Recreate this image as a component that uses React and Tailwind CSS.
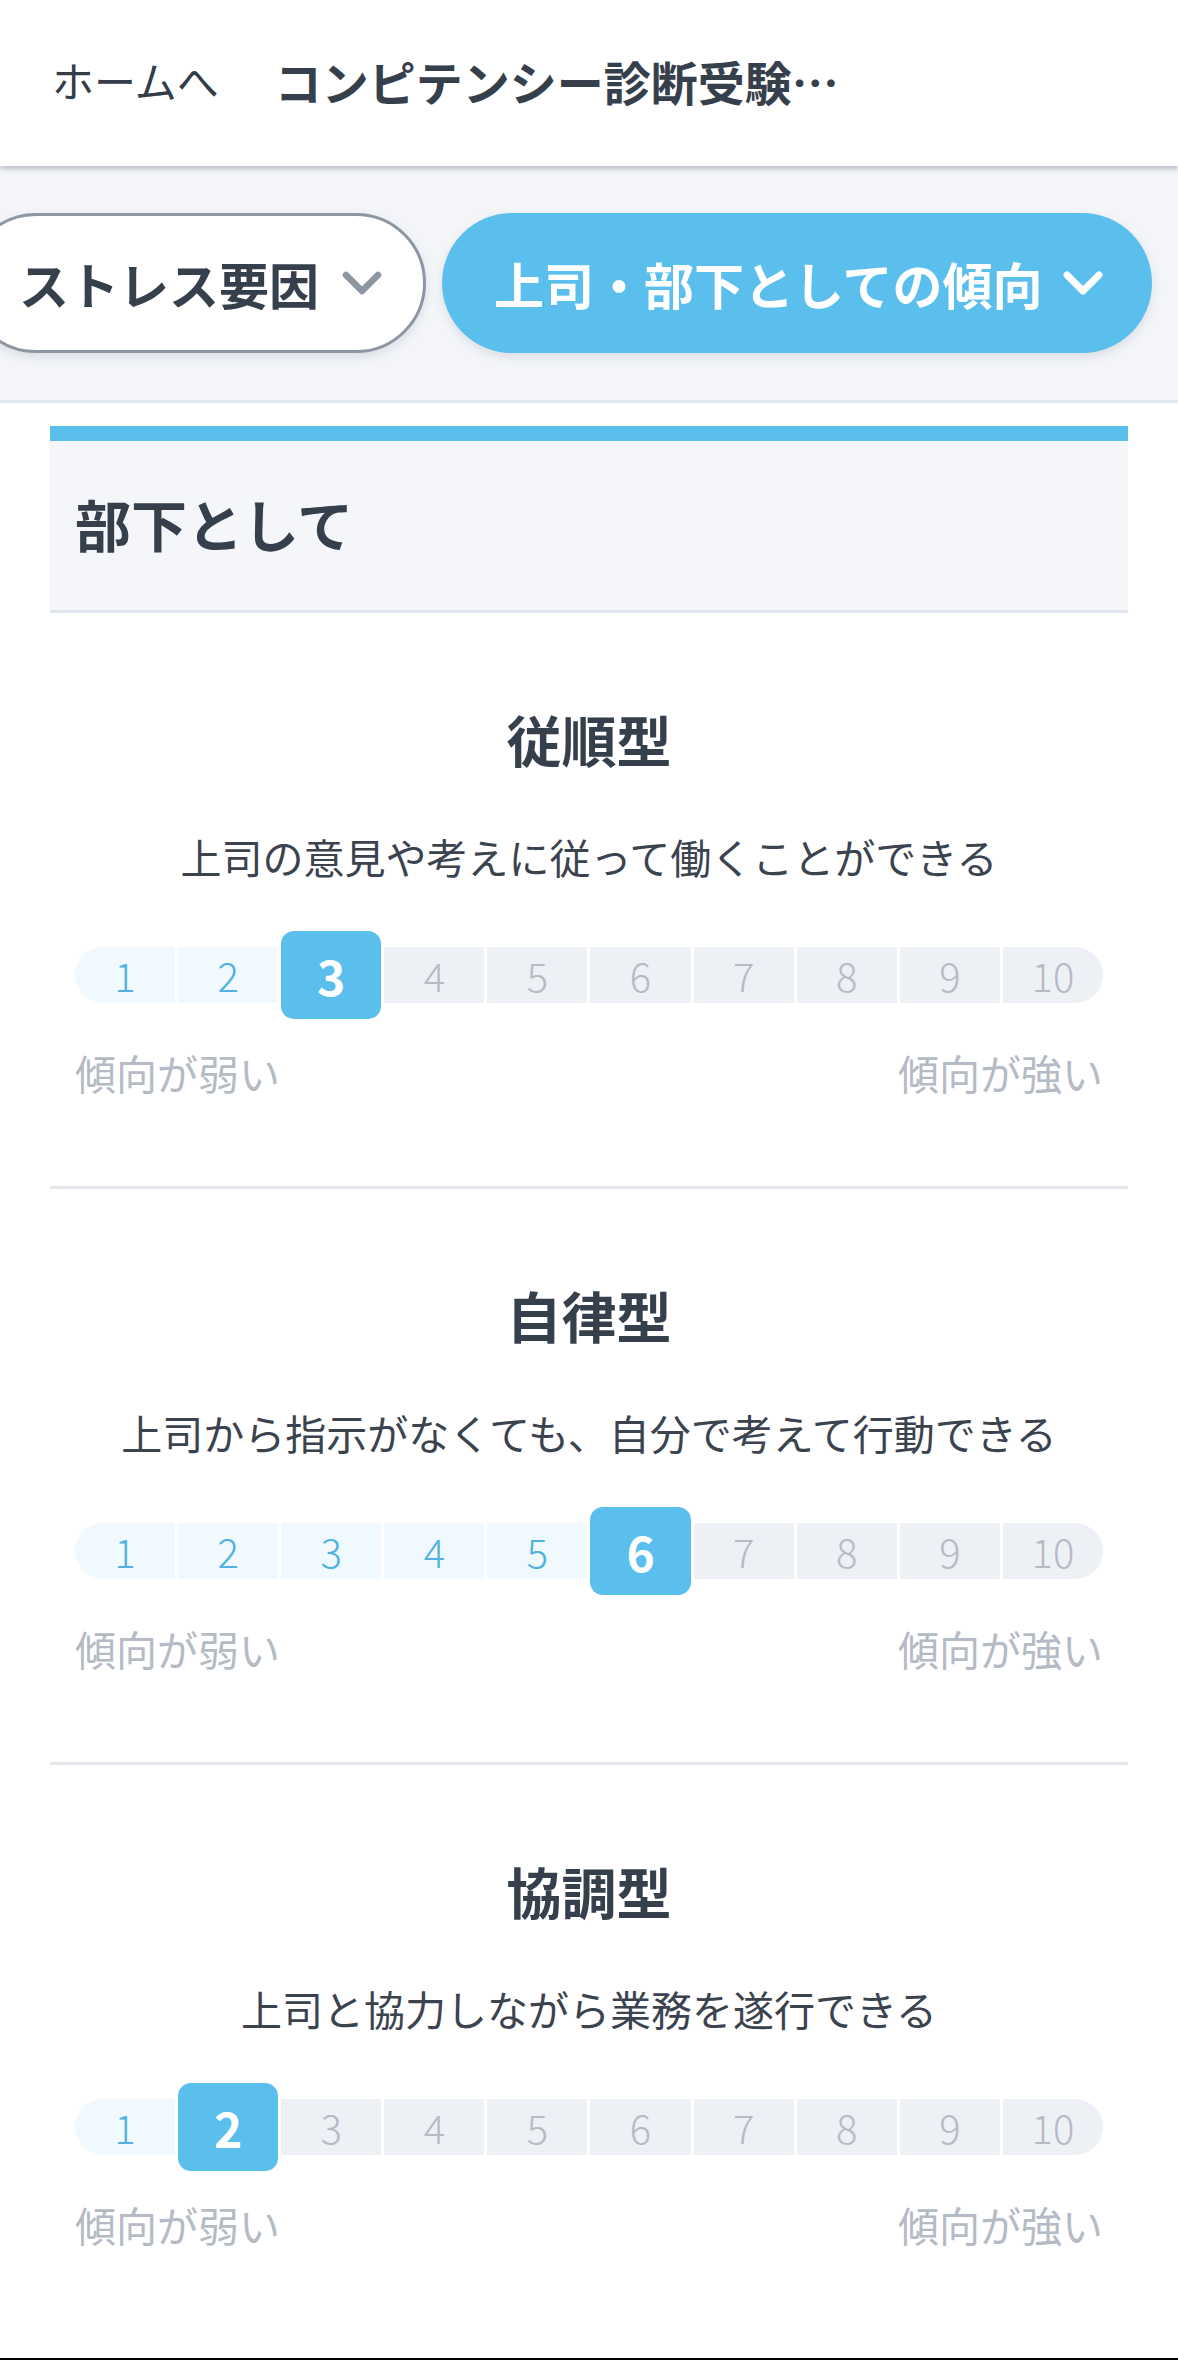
import React from 'react';
import { ChevronDown } from 'lucide-react';

const FONT = { fontFamily: '"Noto Sans CJK JP", "Noto Sans", sans-serif' };

const items = [
    { title: '従順型', desc: '上司の意見や考えに従って働くことができる', score: 3 },
    { title: '自律型', desc: '上司から指示がなくても、自分で考えて行動できる', score: 6 },
    { title: '協調型', desc: '上司と協力しながら業務を遂行できる', score: 2 },
];

function ScoreBar({ score }) {
    const cells = [1, 2, 3, 4, 5, 6, 7, 8, 9, 10];
    return (
        <div className="grid grid-cols-10 gap-[3px] items-center h-[88px]">
            {cells.map((n) => {
                if (n === score) {
                    return (
                        <div key={n} className="h-[88px] rounded-[13px] bg-[#5bbfee] text-white font-bold text-[48px] leading-none flex items-center justify-center">
                            {n}
                        </div>
                    );
                }
                const before = n < score;
                const edge = n === 1 ? 'rounded-l-full' : n === 10 ? 'rounded-r-full' : '';
                return (
                    <div
                        key={n}
                        className={`h-[56px] flex items-center justify-center text-[40px] leading-none font-light ${edge} ${before ? 'bg-[#eff9fe] text-[#4fb1df]' : 'bg-[#edf0f5] text-[#b5bbc5]'}`}
                    >
                        {n}
                    </div>
                );
            })}
        </div>
    );
}

function Item({ title, desc, score, last }) {
    return (
        <div className={`pt-[98px] ${last ? 'pb-[60px]' : 'pb-[93px] border-b-[3px] border-[#e3e7ec]'}`}>
            <h3 className="text-center text-[55px] leading-none font-bold text-[#36404d]">{title}</h3>
            <p className="mt-[70px] text-center text-[41px] leading-none text-[#3b434f]">{desc}</p>
            <div className="mt-[54px] px-[25px]">
                <ScoreBar score={score} />
            </div>
            <div className="mt-[33px] px-[25px] flex justify-between text-[41px] leading-none text-[#b5bbc5]">
                <span>傾向が弱い</span>
                <span>傾向が強い</span>
            </div>
        </div>
    );
}

export default function App() {
    return (
        <div className="w-[1178px] min-h-[2360px] bg-white flex flex-col overflow-hidden" style={FONT}>
            {/* Header */}
            <header className="relative z-10 h-[166px] bg-white flex items-center pl-[52px] gap-[56px] pb-[6px] shadow-[0_3px_5px_rgba(80,90,110,0.35)]">
                <span className="text-[42px] leading-none text-[#333c48]">ホームへ</span>
                <span className="text-[47px] leading-none font-bold text-[#36404d]">コンピテンシー診断受験…</span>
            </header>

            {/* Category pills */}
            <div className="h-[237px] bg-[#f3f5f9] border-b-[3px] border-[#e1e5ec] flex items-center overflow-hidden">
                <div className="flex gap-[16px] -ml-[34px] shrink-0">
                    <button className="h-[140px] rounded-full bg-white border-[3px] border-[#8d96a3] pl-[50px] pr-[29px] flex items-center gap-[11px] shadow-[0_4px_10px_rgba(80,90,110,0.15)]">
                        <span className="text-[50px] leading-none font-bold text-[#36404d] whitespace-nowrap">ストレス要因</span>
                        <ChevronDown size={64} strokeWidth={2.5} className="text-[#8d96a3]" />
                    </button>
                    <button className="h-[140px] rounded-full bg-[#5bbfee] pl-[52px] pr-[37px] flex items-center gap-[8px] shadow-[0_4px_10px_rgba(80,90,110,0.15)]">
                        <span className="text-[50px] leading-none font-bold text-white whitespace-nowrap">上司・部下としての傾向</span>
                        <ChevronDown size={64} strokeWidth={2.6} className="text-white" />
                    </button>
                </div>
            </div>

            {/* Content */}
            <main className="flex-1 mx-[50px] pt-[23px]">
                <section>
                    <div className="h-[15px] bg-[#5bbfee]" />
                    <div className="h-[172px] bg-[#f4f6fa] border-b-[3px] border-[#e1e5ee] flex items-center px-[25px] pb-[6px]">
                        <h2 className="text-[56px] leading-none font-bold text-[#36404d]">部下として</h2>
                    </div>
                </section>
                {items.map((it, i) => (
                    <Item key={it.title} {...it} last={i === items.length - 1} />
                ))}
            </main>
            <div className="h-[2px] bg-black" />
        </div>
    );
}
